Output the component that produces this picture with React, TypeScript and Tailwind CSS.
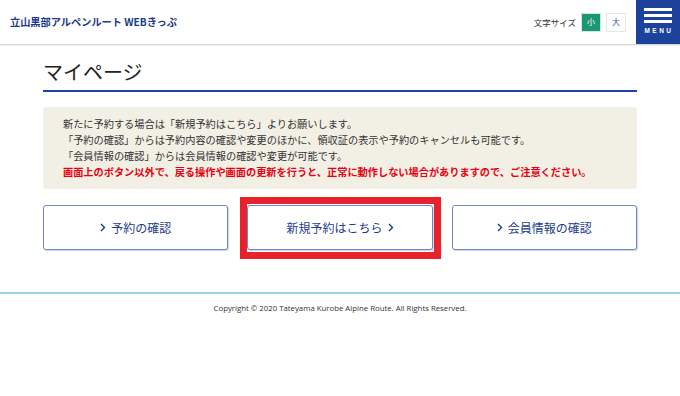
const jp = { fontFamily: '"Noto Sans CJK JP", "Noto Sans", sans-serif' };

const Chevron = () => (
  <svg width="6" height="9" viewBox="0 0 6 9" className="inline-block">
    <path d="M1 1l3.5 3.5L1 8" fill="none" stroke="currentColor" strokeWidth="1.4" />
  </svg>
);

const Header = () => (
  <header className="h-[45px] flex items-center justify-between border-b border-[#d6d6d6] shadow-[0_1px_2px_rgba(0,0,0,0.08)] bg-white">
    <div className="pl-[10px] text-[10.2px] font-bold text-[#1b3a8c]">
      立山黒部アルペンルート WEBきっぷ
    </div>
    <div className="flex items-center h-full">
      <span className="text-[8.5px] text-[#333] mr-[5px]">文字サイズ</span>
      <button className="w-[20px] h-[19px] bg-[#1b9772] text-white text-[8px] flex items-center justify-center border border-[#cfe8df]">
        小
      </button>
      <button className="w-[20px] h-[19px] ml-[5px] bg-white text-[#3a5aa8] text-[8px] flex items-center justify-center border border-[#e6e6e6]">
        大
      </button>
      <button className="ml-[10px] w-[44px] h-full bg-[#1c429c] flex flex-col items-center pt-[8px]">
        <span className="w-[28px] h-[3px] bg-white" />
        <span className="w-[28px] h-[3px] bg-white mt-[3px]" />
        <span className="w-[28px] h-[3px] bg-white mt-[3px]" />
        <span className="mt-[5px] text-[6.5px] font-bold text-white tracking-[2.5px] pl-[2px] leading-none" style={{ fontFamily: '"Liberation Sans", sans-serif' }}>
          MENU
        </span>
      </button>
    </div>
  </header>
);

const NavButton = ({ label, arrow, highlight }: { label: string; arrow: "left" | "right"; highlight?: boolean }) => (
  <div className="relative">
    <button className="w-full h-[45px] rounded-[3px] border border-[#7387c0] bg-white shadow-[1px_1px_1px_rgba(110,130,190,0.35)] text-[12px] text-[#1d3b8e] flex items-center justify-center gap-[5px]">
      {arrow === "left" && <Chevron />}
      <span>{label}</span>
      {arrow === "right" && <Chevron />}
    </button>
    {highlight && (
      <span className="absolute left-[-7px] right-[-8px] top-[-8px] bottom-[-9px] border-[7px] border-[#e8212b] pointer-events-none" />
    )}
  </div>
);

export default function App() {
  return (
    <div className="min-h-[396px] bg-white text-[#333]" style={jp}>
      <Header />
      <main className="max-w-[594px] mx-auto">
        <h1 className="mt-[14px] text-[20px] leading-[26px] font-normal text-[#222] pb-[5px] border-b-2 border-[#1d46a3]">
          マイページ
        </h1>
        <div className="mt-[15px] bg-[#f2f0e5] rounded-[4px] px-[20px] py-[9px] text-[10.2px] leading-[16px] text-[#333]">
          <p>新たに予約する場合は「新規予約はこちら」よりお願いします。</p>
          <p>「予約の確認」からは予約内容の確認や変更のほかに、領収証の表示や予約のキャンセルも可能です。</p>
          <p>「会員情報の確認」からは会員情報の確認や変更が可能です。</p>
          <p className="font-bold text-[#e60012]">
            画面上のボタン以外で、戻る操作や画面の更新を行うと、正常に動作しない場合がありますので、ご注意ください。
          </p>
        </div>
        <div className="mt-[16px] grid grid-cols-3 gap-[19px]">
          <NavButton label="予約の確認" arrow="left" />
          <NavButton label="新規予約はこちら" arrow="right" highlight />
          <NavButton label="会員情報の確認" arrow="left" />
        </div>
      </main>
      <footer className="mt-[42px] border-t-2 border-[#9ed2ea] pt-[9px] text-center text-[7.8px] text-[#333]" style={{ fontFamily: '"Open Sans", sans-serif' }}>
        Copyright © 2020 Tateyama Kurobe Alpine Route. All Rights Reserved.
      </footer>
    </div>
  );
}
